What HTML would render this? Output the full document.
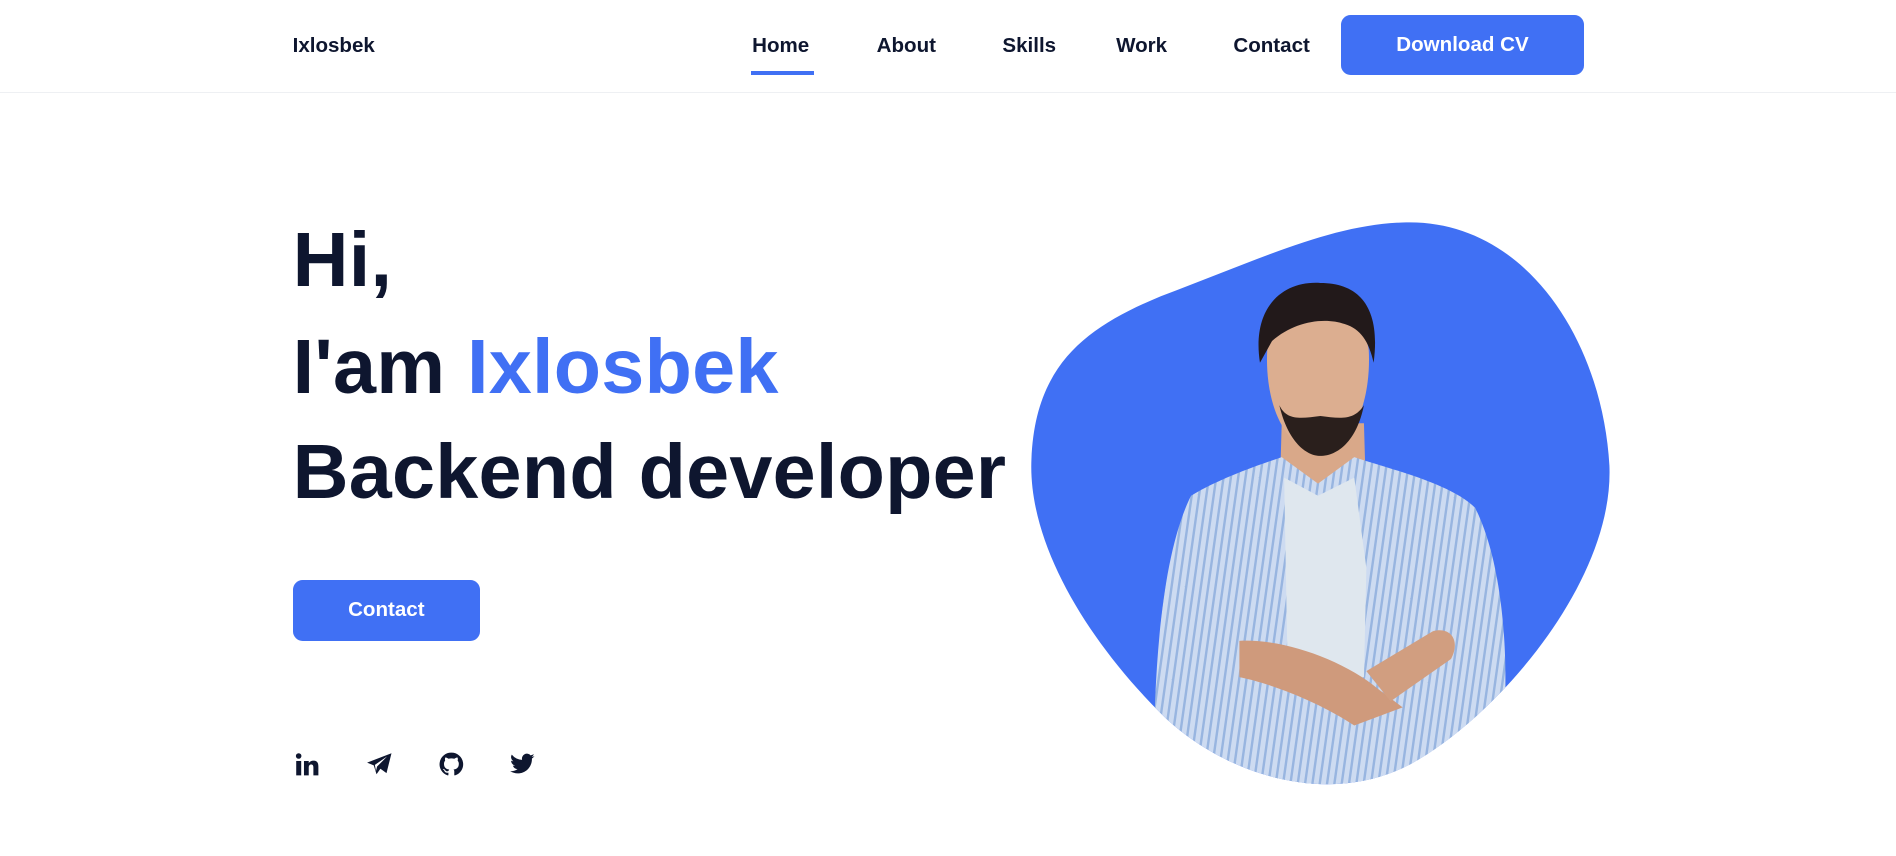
<!DOCTYPE html>
<html><head><meta charset="utf-8">
<style>
html,body{margin:0;padding:0;background:#fff;overflow:hidden}
body{width:1568px;height:708px;zoom:1.20918;position:relative;font-family:"Liberation Sans",sans-serif;color:#0e162f}
.nav{position:absolute;left:0;top:0;width:1568px;height:76px;border-bottom:1px solid #eef0f3}
.logo{position:absolute;left:242px;top:28px;font-size:17px;font-weight:bold}
.link{position:absolute;top:28px;font-size:17px;font-weight:bold}
.ul{position:absolute;left:621px;top:59px;width:52px;height:3px;background:#4070f4}
.btn{position:absolute;background:#4070f4;color:#fff;border-radius:8px;font-weight:bold;font-size:17px;text-align:center}
h1{position:absolute;left:242px;margin:0;font-size:64px;font-weight:bold;line-height:64px;white-space:nowrap;letter-spacing:0.2px}
.blue{color:#4070f4}
.ic{position:absolute;top:621px}
</style></head><body>
<div class="nav">
<div class="logo">Ixlosbek</div>
<div class="link" style="left:622px">Home</div>
<div class="link" style="left:725px">About</div>
<div class="link" style="left:829px">Skills</div>
<div class="link" style="left:923px">Work</div>
<div class="link" style="left:1020px">Contact</div>
<div class="ul"></div>
<div class="btn" style="left:1109px;top:12px;width:201px;height:50px;line-height:50px">Download CV</div>
</div>
<h1 style="top:184px">Hi,</h1>
<h1 style="top:272px">I'am <span class="blue">Ixlosbek</span></h1>
<h1 style="top:359px">Backend developer</h1>
<div class="btn" style="left:242px;top:480px;width:155px;height:50px;line-height:50px">Contact</div>

<svg class="ic" style="left:243px" width="22" height="22" viewBox="0 0 24 24"><rect x="2" y="9" width="4.5" height="13" fill="#0e162f"/><circle cx="4.2" cy="4.5" r="2.5" fill="#0e162f"/><path d="M9 9h4.3v2c.8-1.4 2.4-2.3 4.3-2.3 3.3 0 4.4 2 4.4 5.4V22h-4.5v-7c0-1.6-.4-2.8-2-2.8s-2.2 1.2-2.2 2.8v7H9z" fill="#0e162f"/></svg>
<svg class="ic" style="left:303px" width="22" height="22" viewBox="0 0 24 24"><path d="M23 2L1 10.5l6 2.5 2.5 8 3.5-5 5.5 4z M8 12.5l11-7.5-9 9-1 4z" fill="#0e162f" fill-rule="evenodd"/></svg>
<svg class="ic" style="left:362px" width="22" height="22" viewBox="0 0 24 24"><path d="M12 1.5A10.5 10.5 0 0 0 8.7 22c.5.1.7-.2.7-.5v-2c-2.9.6-3.500-1.3-3.5-1.3-.5-1.2-1.2-1.5-1.2-1.5-1-.6.1-.6.1-.6 1 .1 1.6 1.1 1.6 1.1.9 1.6 2.5 1.1 3.1.9.1-.7.4-1.1.7-1.4-2.3-.3-4.8-1.2-4.8-5.2 0-1.1.4-2.1 1.1-2.8-.1-.3-.5-1.4.1-2.8 0 0 .9-.3 2.9 1.1a10 10 0 0 1 5.2 0c2-1.4 2.9-1.1 2.9-1.1.6 1.4.2 2.5.1 2.8.7.7 1.1 1.700 1.1 2.8 0 4-2.5 4.9-4.8 5.2.4.3.7 1 .7 1.9v2.9c0 .3.2.6.7.5A10.5 10.5 0 0 0 12 1.5z" fill="#0e162f"/></svg>
<svg class="ic" style="left:421px" width="22" height="22" viewBox="0 0 24 24"><path d="M23 4.6c-.8.4-1.7.6-2.6.7.9-.6 1.6-1.4 2-2.5-.9.5-1.9.9-2.9 1.1A4.5 4.5 0 0 0 11.8 8 12.8 12.8 0 0 1 2.5 3.3a4.5 4.5 0 0 0 1.4 6c-.7 0-1.4-.2-2-.6 0 2.2 1.5 4 3.6 4.4-.7.2-1.4.2-2 .1.6 1.8 2.2 3.1 4.2 3.1A9 9 0 0 1 1 18.2 12.8 12.8 0 0 0 7.9 20.2c8.3 0 12.8-6.9 12.8-12.8v-.6c.9-.6 1.7-1.4 2.3-2.2z" fill="#0e162f"/></svg>

<svg style="position:absolute;left:0;top:0" width="1568" height="708" viewBox="0 0 1568 708">
<defs>
<clipPath id="bl"><path d="M1160,184 C1260,180 1325,280 1331,385 C1335,480 1240,590 1170,630 C1100,670 1010,640 960,590 C900,530 850,450 853,380 C856,300 900,270 960,245 C1040,215 1100,186 1160,184 Z"/></clipPath>
<pattern id="st" width="6" height="6" patternUnits="userSpaceOnUse" patternTransform="rotate(8)"><rect width="6" height="6" fill="#cddbf1"/><rect width="2" height="6" fill="#98b5e0"/></pattern>
</defs>
<path d="M1160,184 C1260,180 1325,280 1331,385 C1335,480 1240,590 1170,630 C1100,670 1010,640 960,590 C900,530 850,450 853,380 C856,300 900,270 960,245 C1040,215 1100,186 1160,184 Z" fill="#4070f4"/>
<g clip-path="url(#bl)">
<path d="M1060,350 L1128,350 L1130,420 L1058,420 Z" fill="#d9a889"/>
<path d="M985,410 C1010,395 1040,385 1060,378 L1090,400 L1120,378 C1150,388 1200,400 1220,420 C1240,460 1245,520 1245,560 L1245,700 L955,700 C952,600 955,470 985,410 Z" fill="url(#st)"/>
<path d="M1062,395 L1090,410 L1120,395 L1130,470 L1128,560 L1065,560 Z" fill="#dfe7ee"/>
<path d="M1025,530 C1060,528 1110,545 1140,570 L1160,585 L1120,600 C1090,580 1050,565 1025,560 Z" fill="#cf9a7c"/>
<path d="M1130,555 L1185,522 C1200,518 1208,530 1200,545 L1150,580 Z" fill="#d19e80"/>
<path d="M1040,585 C1080,590 1120,600 1160,610 L1230,590 L1240,640 L1050,650 Z" fill="url(#st)"/>
<path d="M1048,290 C1046,330 1060,370 1090,375 C1120,372 1134,330 1132,290 C1130,270 1110,262 1090,262 C1068,262 1050,270 1048,290 Z" fill="#dcae90"/>
<path d="M1042,300 C1035,255 1060,232 1092,234 C1125,234 1142,255 1136,300 C1132,282 1125,272 1112,268 C1095,262 1070,266 1052,282 Z" fill="#22191a"/>
<path d="M1058,335 C1065,365 1080,377 1092,377 C1106,377 1122,365 1128,335 C1120,348 1108,346 1092,344 C1076,346 1064,348 1058,335 Z" fill="#2a1f1c"/>
</g>
</svg>
</body></html>
